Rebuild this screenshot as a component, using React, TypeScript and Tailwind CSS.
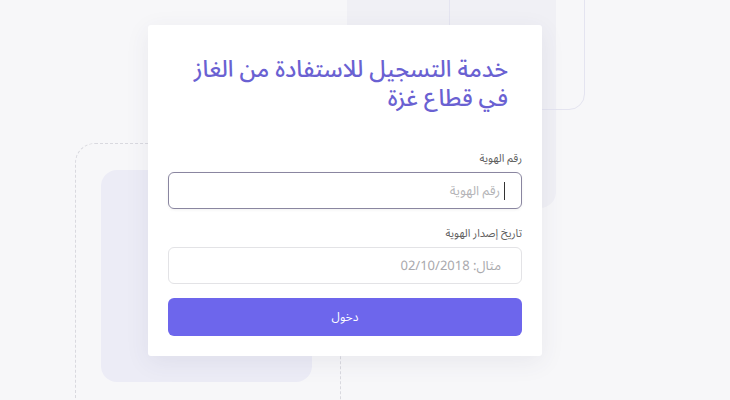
import React from "react";

const font = { fontFamily: '"Noto Sans Arabic UI", "Noto Sans Arabic", "DejaVu Sans", "Noto Sans", sans-serif' };

export default function App() {
  return (
    <div className="relative w-[730px] h-[400px] overflow-hidden bg-[#f7f7f9]" style={font}>
      {/* decorative background shapes */}
      <div className="absolute left-[347px] top-[-40px] w-[209px] h-[248px] rounded-[16px] bg-[#f0f0f5]" />
      <div className="absolute left-[449px] top-[-40px] w-[136px] h-[150px] rounded-[16px] border border-[#e4e4f0]" />
      <div className="absolute left-[75px] top-[143px] w-[266px] h-[300px] rounded-[20px] border border-dashed border-[#d9d9df]" />
      <div className="absolute left-[101px] top-[170px] w-[211px] h-[212px] rounded-[16px] bg-[#ececf6]" />

      <div className="relative flex pl-[148px] pt-[25px]">
        <div
          dir="rtl"
          className="flex w-[394px] flex-col bg-white rounded-[3px] shadow-[0_6px_24px_rgba(60,60,100,0.08)] px-[20px] pt-[30px] pb-[20px]"
        >
          <h1 className="flex flex-col gap-[2px] pr-[14px] text-[23px] text-[#6a61d2] font-medium">
            <span className="block h-[27px] leading-[27px]">خدمة التسجيل للاستفادة من الغاز</span>
            <span className="block h-[27px] leading-[27px]">في قطاع غزة</span>
          </h1>

          <div className="mt-[40px] flex flex-col gap-[7px]">
            <label className="text-[11px] leading-[14px] text-[#606060]">رقم الهوية</label>
            <div className="h-[37px] rounded-[6px] border border-[#8a86a0] flex items-center gap-[4px] pr-[16px] shadow-[0_1px_3px_rgba(0,0,0,0.06)]">
              <span className="w-px h-[18px] bg-[#333]" />
              <span className="text-[13px] text-[#b5b5b8]">رقم الهوية</span>
            </div>
          </div>

          <div className="mt-[17px] flex flex-col gap-[7px]">
            <label className="text-[11px] leading-[14px] text-[#606060]">تاريخ إصدار الهوية</label>
            <div className="h-[37px] rounded-[6px] border border-[#e3e3e6] flex items-center pr-[20px]">
              <span className="text-[13px] text-[#a9a9ad]">مثال: 02/10/2018</span>
            </div>
          </div>

          <button className="mt-[14px] w-full h-[38px] rounded-[6px] bg-[#6d66ec] text-white text-[12px] flex items-center justify-center">
            دخول
          </button>
        </div>
      </div>
    </div>
  );
}
